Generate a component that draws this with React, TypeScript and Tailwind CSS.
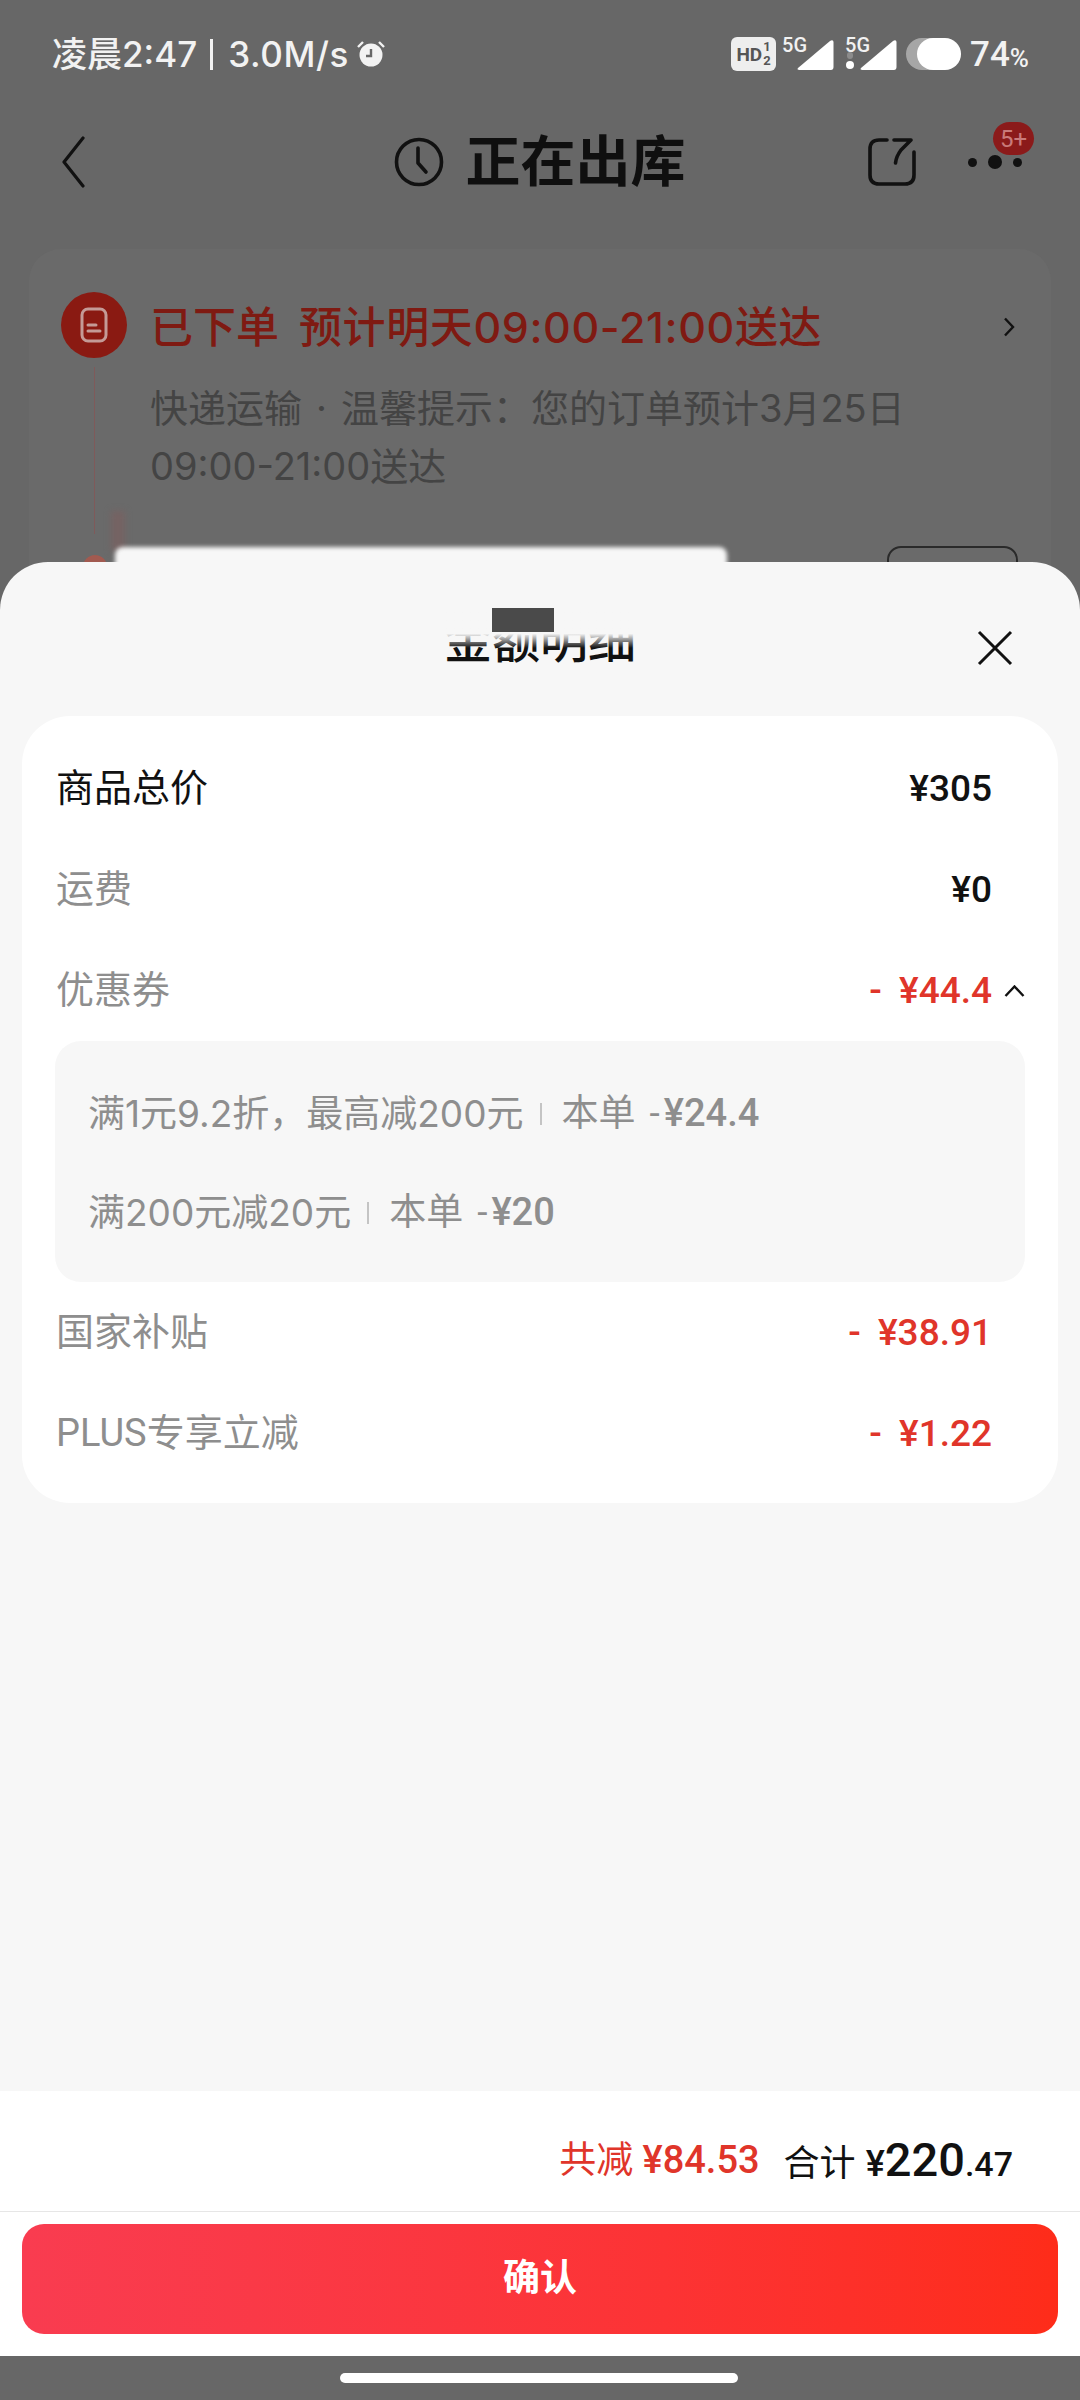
const inter = "[font-family:Inter,'Noto_Sans_CJK_SC',sans-serif]";

const Row = ({ label, value, labelClass = "text-[#8e8e8e]", valueClass = "text-[#e0352a]", chevron = false }: { label: string; value: string; labelClass?: string; valueClass?: string; chevron?: boolean }) => (
  <div className="flex h-[101px] items-center pl-[34px]">
    <span className={`flex-1 text-[38px] ${labelClass}`}>{label}</span>
    <span className={`text-[37px] font-medium [word-spacing:8px] ${valueClass}`}>{value}</span>
    <span className="flex w-[66px] pl-[12px]">
      {chevron && (
        <svg width="21" height="12" viewBox="0 0 21 12" fill="none" stroke="#111" strokeWidth="2.4">
          <path d="M1.5 11 10.5 1.5 19.5 11" />
        </svg>
      )}
    </span>
  </div>
);

const CouponLine = ({ text, save }: { text: string; save: string }) => (
  <div className="flex h-[99px] items-center text-[37px] text-[#8e8e8e]">
    <span className={inter}>{text}</span>
    <span className="ml-[16px] mr-[20px] h-[22px] w-[2px] bg-[#c4c4c4]" />
    <span>本单</span>
    <span className="ml-[14px] mr-[4px]">-</span>
    <span className="text-[38px] font-medium">{save}</span>
  </div>
);

const StatusIcons = () => (
  <div className="flex items-center">
    <div className="flex h-[34px] w-[45px] items-center justify-center rounded-[6px] bg-[#eeeeee] text-[#555] text-[19px] font-bold leading-none">
      HD<span className="flex flex-col text-[13px] leading-[14px] ml-[1px]"><span>1</span><span>2</span></span>
    </div>
    <div className="relative ml-[6px] h-[34px] w-[52px]">
      <span className="absolute left-0 top-[-3px] text-[20px] font-medium leading-[22px] text-[#f2f2f2]">5G</span>
      <svg className="absolute left-[15px] top-[2px]" width="37" height="31" viewBox="0 0 37 31" fill="#fff">
        <path d="M1 29 33 2c2-1.500 3.500-1 3.500 1.500V28c0 2-1 3-2.500 3H2.500C.5 31 0 30 1 29Z" />
      </svg>
    </div>
    <div className="relative ml-[11px] h-[34px] w-[52px]">
      <span className="absolute left-0 top-[-3px] text-[20px] font-medium leading-[22px] text-[#f2f2f2]">5G</span>
      <span className="absolute left-[1px] top-[24px] h-[8px] w-[8px] rounded-full bg-white" />
      <span className="absolute left-[2px] top-[15px] h-[7px] w-[6px] rounded-full bg-[#8c8c8c]" />
      <svg className="absolute left-[15px] top-[2px]" width="37" height="31" viewBox="0 0 37 31" fill="#fff">
        <path d="M1 29 33 2c2-1.500 3.500-1 3.500 1.500V28c0 2-1 3-2.500 3H2.500C.5 31 0 30 1 29Z" />
      </svg>
    </div>
    <div className="relative ml-[9px] h-[32px] w-[55px]">
      <span className="absolute left-0 top-0 h-[32px] w-[40px] rounded-full bg-[#a6a6a6]" />
      <span className="absolute right-0 top-0 h-[32px] w-[44px] rounded-full bg-white" />
    </div>
    <span className="ml-[9px] text-[35px] font-medium leading-none text-[#f2f2f2]">74</span>
    <span className="text-[26px] font-medium leading-none text-[#f2f2f2] mt-[7px]">%</span>
  </div>
);

const NavBar = () => (
  <div className="grid h-[108px] grid-cols-[1fr_auto_1fr] items-center">
    <svg className="ml-[61px]" width="24" height="52" viewBox="0 0 24 52" fill="none" stroke="#111" strokeWidth="3.2" strokeLinecap="round" strokeLinejoin="round">
      <path d="M22 2 3 26l19 24" />
    </svg>
    <div className="flex items-center">
      <svg width="50" height="50" viewBox="0 0 50 50" fill="none" stroke="#111" strokeWidth="3.6" strokeLinecap="round" strokeLinejoin="round">
        <circle cx="25" cy="25" r="22.500" />
        <path d="M24 11v15l8 9" />
      </svg>
      <span className="ml-[21px] text-[55px] font-bold leading-none text-[#0f0f0f]">正在出库</span>
    </div>
    <div className="relative flex items-center justify-end pr-[58px]">
      <svg className="mr-[51px]" width="50" height="50" viewBox="0 0 50 50" fill="none" stroke="#111" strokeWidth="3.6" strokeLinecap="round" strokeLinejoin="round">
        <path d="M20 3H12C6 3 3 6 3 12v26c0 6 3 9 9 9h26c6 0 9-3 9-9V15" />
        <path d="M27 3h17L34 13c-3 4-5 8-5.500 13" />
      </svg>
      <div className="flex items-center gap-[11px]">
        <span className="h-[9px] w-[9px] rounded-full bg-[#111]" />
        <span className="h-[14px] w-[14px] rounded-full bg-[#111]" />
        <span className="h-[9px] w-[9px] rounded-full bg-[#111]" />
      </div>
      <span className="absolute right-[46px] top-[-15px] flex h-[33px] w-[41px] items-center justify-center rounded-full bg-[#8b1a1a] text-[24px] leading-none text-[#c97a7a]">5+</span>
    </div>
  </div>
);

const OrderCard = () => (
  <div className="relative mx-[29px] mt-[33px] h-[400px] rounded-[32px] bg-[#6a6a6a] pl-[32px] pt-[43px]">
    <div className="flex">
      <div className="flex w-[66px] flex-col items-center">
        <div className="flex h-[66px] w-[66px] items-center justify-center rounded-full bg-[#8a1a12]">
          <svg width="28" height="36" viewBox="0 0 28 36" fill="none" stroke="#c49a96" strokeWidth="3" strokeLinecap="round">
            <rect x="2" y="2" width="24" height="32" rx="6" />
            <path d="M8 18h8M8 24h12" />
          </svg>
        </div>
        <div className="mt-[9px] h-[167px] w-[1px] bg-[#7f5a5a]" />
      </div>
      <div className="ml-[23px] flex-1">
        <div className="mt-[2px] flex h-[66px] items-center justify-between pr-[36px] text-[#7f1a12]">
          <span className={`text-[43px] font-medium leading-none ${inter}`}>
            已下单<span className="ml-[20px] tracking-[0.6px]">预计明天09:00-21:00送达</span>
          </span>
          <svg width="12" height="20" viewBox="0 0 12 20" fill="none" stroke="#111" strokeWidth="2.4">
            <path d="M2 1.500 10 10 2 18.500" />
          </svg>
        </div>
        <p className={`mt-[19px] text-[38px] leading-[58px] text-[#444444] ${inter}`}>
          快递运输<span className="mx-[14px]">·</span>温馨提示：您的订单预计3月25日
          <br />
          09:00-21:00送达
        </p>
      </div>
    </div>
    <div className="absolute left-[54px] top-[306px] h-[24px] w-[24px] rounded-full bg-[#a25a50]" />
    <div className="absolute left-[82px] top-[262px] h-[40px] w-[14px] bg-[#756363] blur-[3px]" />
    <div className="absolute left-[86px] top-[298px] h-[40px] w-[612px] rounded-t-[8px] bg-[#f7f7f7] blur-[2px]" />
    <div className="absolute left-[858px] top-[297px] h-[40px] w-[131px] rounded-[14px] border-2 border-[#2a2a2a]" />
  </div>
);

export default function App() {
  return (
    <div className="relative h-[2400px] w-[1080px] overflow-hidden bg-[#676767] [font-family:Roboto,'Noto_Sans_CJK_SC',sans-serif]">
      <div className="flex h-[108px] items-center justify-between pl-[52px] pr-[51px]">
        <div className="flex items-center text-[35px] font-medium leading-none text-[#f2f2f2]">
          <span className={inter}>凌晨2:47</span>
          <span className="ml-[13px] mr-[15px] h-[31px] w-[3px] bg-[#f2f2f2]" />
          <span className={`tracking-[0.6px] ${inter}`}>3.0M/s</span>
          <svg className="ml-[8px]" width="28" height="26" viewBox="0 0 28 26">
            <circle cx="14" cy="14" r="11.500" fill="#f2f2f2" />
            <path d="M14 8v7h-5" fill="none" stroke="#676767" strokeWidth="2.4" />
            <path d="M1 6 6 1M27 6l-5-5" stroke="#f2f2f2" strokeWidth="2.400" />
          </svg>
        </div>
        <StatusIcons />
      </div>
      <NavBar />
      <OrderCard />

      {/* bottom sheet over the page */}
      <div className="absolute inset-x-0 bottom-[44px] top-[562px] flex flex-col rounded-t-[48px] bg-[#f7f7f7]">
        <div className="relative grid h-[154px] grid-cols-[1fr_auto_1fr]">
          <div />
          <div className="relative mt-[50px] h-[60px] text-[48px] font-medium leading-[60px] text-[#111]">
            金额明细
            <div className="absolute inset-x-0 top-0 h-[36px] bg-linear-to-b from-[#f7f7f7] from-60% to-transparent" />
            <div className="absolute left-[48px] top-[-4px] h-[24px] w-[62px] bg-[#4a4a4a]" />
          </div>
          <div className="flex justify-end pr-[67px] pt-[68px]">
            <svg width="36" height="36" viewBox="0 0 36 36" fill="none" stroke="#111" strokeWidth="3">
              <path d="M2 2l32 32M34 2 2 34" />
            </svg>
          </div>
        </div>

        <div className="mx-[22px] rounded-[48px] bg-white pb-[19px] pt-[22px]">
          <Row label="商品总价" value="¥305" labelClass="text-[#111]" valueClass="text-[#111]" />
          <Row label="运费" value="¥0" valueClass="text-[#111]" />
          <Row label="优惠券" value="- ¥44.4" chevron />
          <div className="mx-[33px] rounded-[26px] bg-[#f7f7f7] pb-[20px] pl-[33px] pt-[23px]">
            <CouponLine text="满1元9.2折，最高减200元" save="¥24.4" />
            <CouponLine text="满200元减20元" save="¥20" />
          </div>
          <Row label="国家补贴" value="- ¥38.91" />
          <Row label="PLUS专享立减" value="- ¥1.22" />
        </div>

        <div className="flex-1" />

        <div className="h-[265px] bg-white">
          <div className="flex h-[121px] items-center justify-end border-b border-[#e6e6e6] pr-[67px] pt-[18px]">
            <span className="text-[37px] text-[#e0352a]">共减 <span className="text-[38px] font-medium">¥84.53</span></span>
            <span className="ml-[24px] flex items-baseline text-[#111]">
              <span className="text-[36px]">合计</span>
              <span className="ml-[10px] text-[36px] font-medium">¥</span>
              <span className="text-[47px] font-medium">220</span>
              <span className="text-[34px] font-medium">.47</span>
            </span>
          </div>
          <button className="mx-[22px] mt-[12px] flex h-[110px] w-[1036px] items-center justify-center rounded-[22px] bg-linear-to-r from-[#f93c50] to-[#fe2c19] text-[37px] font-semibold text-white">
            确认
          </button>
        </div>
      </div>

      <div className="absolute bottom-[17px] left-[340px] h-[10px] w-[398px] rounded-full bg-white" />
    </div>
  );
}
